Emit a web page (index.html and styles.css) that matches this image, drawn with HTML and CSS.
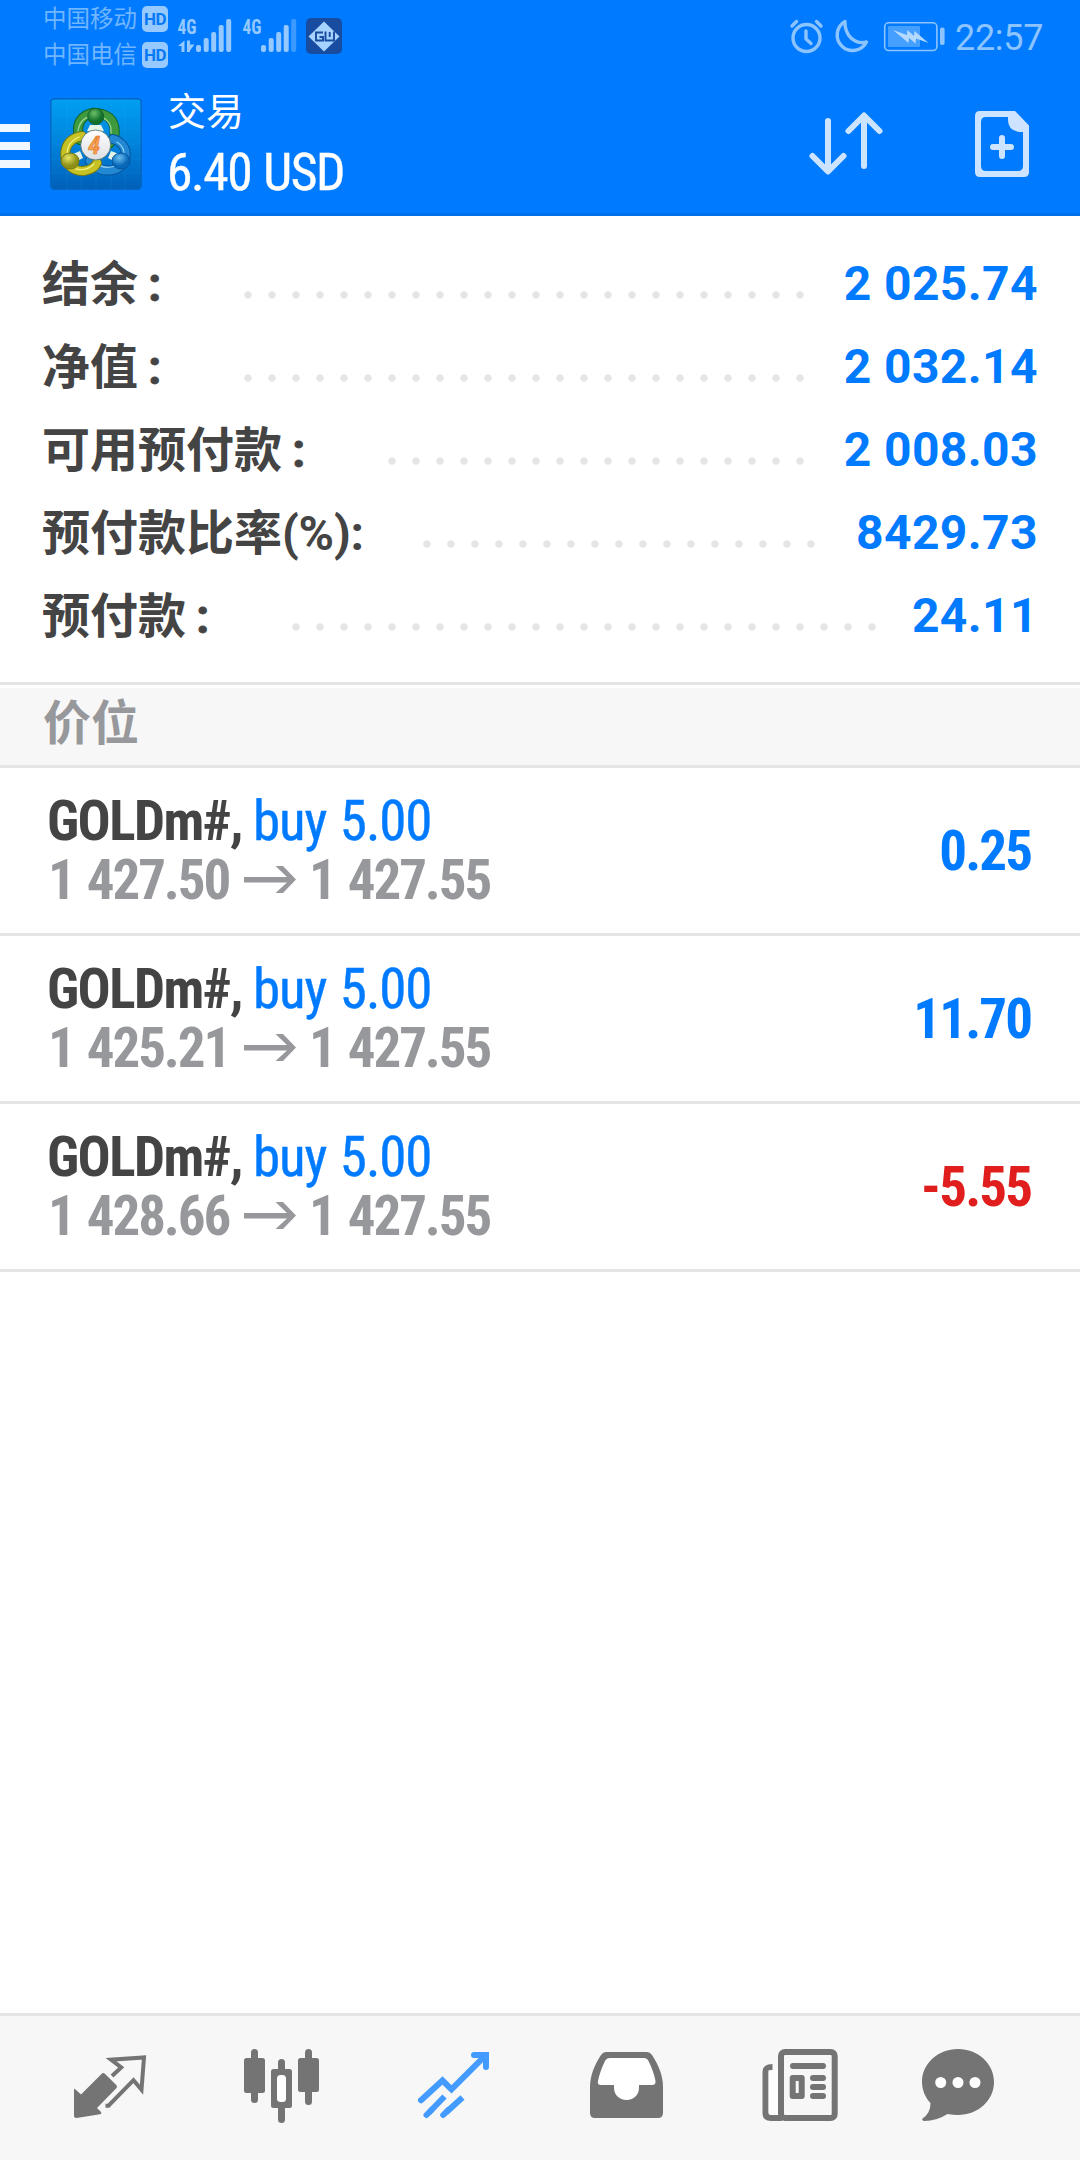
FILE: index.html
```html
<!DOCTYPE html>
<html lang="zh-CN">
<head>
<meta charset="utf-8">
<title>交易</title>
<link rel="stylesheet" href="styles.css">
</head>
<body>
<header class="header">
  <div class="status">
    <div class="carriers">
      <div class="carrier"><span>中国移动</span><b class="hd">HD</b></div>
      <div class="carrier"><span>中国电信</span><b class="hd">HD</b></div>
    </div>
    <svg class="signal" width="124" height="40" viewBox="176 16 124 40">
      <g class="tag"><text x="177.500" y="33.500" textLength="19" lengthAdjust="spacingAndGlyphs">4G</text><text x="242.500" y="33.500" textLength="19" lengthAdjust="spacingAndGlyphs">4G</text></g>
      <path d="M184.500 40.500v11.500h-3v-6h-3.500zM187 40.500h3v4h4.500l-4.500 6v1.500h-3z"/>
      <g><rect x="196" y="45" width="5" height="7" rx="2"/><rect x="203.700" y="38" width="5" height="14" rx="2"/><rect x="211.200" y="32" width="5" height="20" rx="2"/><rect x="218.700" y="25" width="5" height="27" rx="2"/><rect x="226.200" y="19" width="5" height="33" rx="2"/></g>
      <g><rect x="261" y="45" width="5" height="7" rx="2"/><rect x="268.700" y="38" width="5" height="14" rx="2"/><rect x="276.200" y="32" width="5" height="20" rx="2"/><rect x="283.700" y="25" width="5" height="27" rx="2"/><rect x="291.200" y="19" width="5" height="33" rx="2" opacity=".4"/></g>
    </svg>
    <svg class="gu" width="36" height="36" viewBox="0 0 36 36">
      <rect width="36" height="36" rx="5" fill="#174ca0"/><path d="M18 3.500l15.500 15-15.500 15-15.500-15z" fill="#a5d2ff"/>
      <path d="M17 14.500H10v8h7v-3.500h-3.500M19.500 13.500v9h8.500V13.500M23.700 14v5" fill="none" stroke="#174ca0" stroke-width="1.900"/>
    </svg>
    <svg class="sys" width="158" height="40" viewBox="788 16 158 40">
      <g fill="none" stroke="#8cc4ff" stroke-width="3.400" stroke-linecap="round" stroke-linejoin="round">
        <circle cx="806.500" cy="38" r="13.500"/><path d="M806 31v8l5 4.500M792 26l4.500-4.500M821 26l-4.500-4.500"/>
        <path d="M845 21.500a15.500 15.500 0 1 0 21.500 20.500c-12 3-22-7-21.500-20.500z"/>
      </g>
      <rect x="884.700" y="22.800" width="52.200" height="27.700" rx="4" fill="none" stroke="#8cc4ff" stroke-width="1.600"/>
      <rect x="888" y="26" width="32" height="21" rx="1" fill="#459fff"/>
      <path d="M893 30l14 5 .5-5 6.500 6 .5-5 14 12-12.500-4.500-.5 5-6.500-5.500-.5 5z" fill="#b4d9ff"/>
      <rect x="940" y="27.500" width="4.600" height="17.500" rx="2" fill="#8cc4ff"/>
    </svg>
    <time class="clock">22:57</time>
  </div>
  <div class="toolbar">
    <div class="menu"><i></i><i></i><i></i></div>
    <svg class="logo" width="92" height="92" viewBox="0 0 92 92">
      <defs>
        <linearGradient id="bg" x2="0" y2="1"><stop offset="0" stop-color="#009ff2"/><stop offset=".5" stop-color="#0083dc"/><stop offset="1" stop-color="#005fb8"/></linearGradient>
        <radialGradient id="g" cx=".4" cy=".3"><stop offset="0" stop-color="#6cbf68"/><stop offset="1" stop-color="#11702b"/></radialGradient>
        <radialGradient id="y" cx=".4" cy=".3"><stop offset="0" stop-color="#e9e562"/><stop offset="1" stop-color="#8f9018"/></radialGradient>
        <radialGradient id="b" cx=".4" cy=".3"><stop offset="0" stop-color="#6abff0"/><stop offset="1" stop-color="#0868b8"/></radialGradient>
        <linearGradient id="w" x2="0" y2="1"><stop offset="0" stop-color="#fff"/><stop offset="1" stop-color="#dcdfe4"/></linearGradient>
      </defs>
      <rect x=".7" y=".7" width="90.600" height="90.600" rx="4" fill="url(#bg)" stroke="#0567c4" stroke-width="1.500"/>
      <path d="M17 1v90M31 1v90M46 1v90M61 1v90M75 1v90M1 17h90M1 31h90M1 46h90M1 61h90M1 75h90" stroke="#35b4f5" stroke-opacity=".12"/>
      <g fill="none" stroke-linecap="round">
        <path d="M30 42C22 19 41 14 46 15C61 16 67 26 64 40L58 47" stroke="#126327" stroke-width="10"/>
        <path d="M30 42C22 19 41 14 46 15C61 16 67 26 64 40L58 47" stroke="#3f9a3e" stroke-width="8"/>
        <path d="M28 33C30 20 38 18 45 18C56 19 62 25 61 35" stroke="#9bd694" stroke-width="1.300"/>
        <path d="M63 41C80 46 79 66 66 71C52 76 43 68 40 63" stroke="#07549c" stroke-width="10"/>
        <path d="M63 41C80 46 79 66 66 71C52 76 43 68 40 63" stroke="#2288d3" stroke-width="8"/>
        <path d="M67 44C78 51 75 65 65 68C56 71 49 68 45 64" stroke="#8dcff5" stroke-width="1.300"/>
        <path d="M32 38C14 41 12 58 19 67C28 77 43 73 47 65" stroke="#777a12" stroke-width="10"/>
        <path d="M32 38C14 41 12 58 19 67C28 77 43 73 47 65" stroke="#c6c224" stroke-width="8"/>
        <path d="M29 39C18 44 16 52 18 60M26 71C34 73 40 70 44 66" stroke="#f4f07f" stroke-width="1.300"/>
      </g>
      <path d="M40 27h11l3 6H37zM23 56l7-3 3 7-6 3zM69 56l-8-3-3 7 6 3z" fill="#e4f2e7"/>
      <circle cx="45.700" cy="18.500" r="8" fill="url(#g)" stroke="#126327"/>
      <ellipse cx="20" cy="63" rx="9" ry="8" fill="url(#y)" stroke="#777a12"/>
      <ellipse cx="71" cy="63" rx="9" ry="8" fill="url(#b)" stroke="#07549c"/>
      <circle cx="45.700" cy="47" r="15" fill="url(#w)" stroke="#4b6b65" stroke-width=".8"/>
      <text x="38" y="56" class="logo-num">4</text>
    </svg>
    <div class="heading">
      <h1>交易</h1>
      <div class="equity cond">6.40 USD</div>
    </div>
    <svg class="sort" width="80" height="72" viewBox="806 108 80 72" fill="none" stroke="#cce4ff" stroke-width="6" stroke-linecap="round" stroke-linejoin="round"><path d="M828 121v50M812.500 156l15.500 15.500 15.500-15.500M864 166v-50M848.500 131l15.500-15.500 15.500 15.500"/></svg>
    <svg class="new" width="54" height="66" viewBox="975 111 54 66"><path fill="#cce4ff" fill-rule="evenodd" d="M980 111h35l14 14.500V172q0 5-5 5h-44q-5 0-5-5v-56q0-5 5-5zM986 117q-5 0-5 5v44q0 5 5 5h32q5 0 5-5v-34h-3q-12-1-12-12v-3z"/><path d="M1002 138v18M993 147h18" stroke="#cce4ff" stroke-width="6" stroke-linecap="round"/></svg>
  </div>
</header>
<section class="summary">
  <div class="sum"><span class="label">结余<i class="wide">:</i></span><span class="dots" style="--n:24;--gap:40px"></span><b>2 025.74</b></div>
  <div class="sum"><span class="label">净值<i class="wide">:</i></span><span class="dots" style="--n:24;--gap:40px"></span><b>2 032.14</b></div>
  <div class="sum"><span class="label">可用预付款<i class="wide">:</i></span><span class="dots" style="--n:18;--gap:40px"></span><b>2 008.03</b></div>
  <div class="sum"><span class="label">预付款比率<span class="pct">(%):</span></span><span class="dots" style="--n:17;--gap:41px"></span><b>8429.73</b></div>
  <div class="sum"><span class="label">预付款<i class="wide">:</i></span><span class="dots" style="--n:25;--gap:36px"></span><b>24.11</b></div>
</section>
<h2 class="section">价位</h2>
<main class="positions">
  <article class="pos">
    <div class="info">
      <div class="line"><b class="cond sym">GOLDm#,</b><span class="cond side">buy 5.00</span></div>
      <div class="line prices"><b class="cond open">1 427.50</b><svg width="52" height="28" viewBox="0 0 52 28"><path d="M0 11h43L31.500 0h7.500l13 13.500L39 27h-7.500L43 16.500H0z"/></svg><b class="cond now">1 427.55</b></div>
    </div>
    <b class="cond profit">0.25</b>
  </article>
  <article class="pos">
    <div class="info">
      <div class="line"><b class="cond sym">GOLDm#,</b><span class="cond side">buy 5.00</span></div>
      <div class="line prices"><b class="cond open">1 425.21</b><svg width="52" height="28" viewBox="0 0 52 28"><path d="M0 11h43L31.500 0h7.500l13 13.500L39 27h-7.500L43 16.500H0z"/></svg><b class="cond now">1 427.55</b></div>
    </div>
    <b class="cond profit">11.70</b>
  </article>
  <article class="pos">
    <div class="info">
      <div class="line"><b class="cond sym">GOLDm#,</b><span class="cond side">buy 5.00</span></div>
      <div class="line prices"><b class="cond open">1 428.66</b><svg width="52" height="28" viewBox="0 0 52 28"><path d="M0 11h43L31.500 0h7.500l13 13.500L39 27h-7.500L43 16.500H0z"/></svg><b class="cond now">1 427.55</b></div>
    </div>
    <b class="cond profit loss">-5.55</b>
  </article>
</main>
<nav class="tabs">
  <svg viewBox="70 2046 80 80"><path d="M74 2090q0-2 1.500-.500l5.500 5 20.500-20.500q1.800-1.800 3.600 0l11.200 11q1.500 1.700 0 3.300L97 2108l4 4q1 2-1 2.300L76.500 2118q-2.500 0-2.500-2.500z"/><path d="M112 2076l9.200-8.500-10.200-7.800 33-2.200-2.500 32.200-8-9.500-25 25.500h-3" fill="none" stroke="#747474" stroke-width="4"/></svg>
  <svg viewBox="242 2046 80 80"><g><rect x="251" y="2049" width="7" height="54" rx="3.500"/><rect x="244" y="2058" width="21" height="35" rx="2.500"/><rect x="278" y="2059" width="7" height="64" rx="3.500"/><rect x="271" y="2069" width="21" height="39" rx="2.500"/><rect x="277" y="2075" width="9" height="27" rx="3.500" fill="#fff"/><rect x="305" y="2049" width="7" height="56" rx="3.500"/><rect x="298" y="2058" width="21" height="34" rx="2.500"/></g></svg>
  <svg viewBox="414 2046 80 80"><g fill="none" stroke="#449bff" stroke-width="6"><path stroke-linecap="round" d="M421 2100.300l21.500-19.800 9 8.800 33-33M474 2055h12v12"/><path d="M429 2112.500l15.500-16M446 2112.500l16.500-15"/><path stroke-linecap="round" d="M426.500 2115l5-5M443.200 2115l5-5"/></g></svg>
  <svg viewBox="586 2046 80 80"><path d="M606 2052h41q3 0 5 3c7 11 11 21 11 32v26q0 5-5 5h-63q-5 0-5-5v-26c0-11 4-21 11-32q2-3 5-3z"/><path fill="#fff" d="M610 2058h34q3 0 4.500 3c3 6 6 14 7 20q.500 4-3.500 4h-13v2q0 6-3 9-4 4-9.500 4t-9.500-4q-3-3-3-9v-2h-13q-4 0-3-4c1-6 4-14 7-20q1.500-3 5-3z"/></svg>
  <svg viewBox="758 2046 80 80"><rect x="781" y="2052" width="53.700" height="66" rx="4" fill="#f7f7f7" stroke="#747474" stroke-width="6"/><path d="M782 2118h-11q-5.500 0-5.500-5v-41q0-5 7-5" fill="none" stroke="#747474" stroke-width="6"/><path d="M768.500 2070h9.500v45h-7q-2.500 0-2.500-3z" fill="#fff" opacity=".7"/><rect x="790" y="2063" width="36" height="6" rx="3"/><rect x="792.700" y="2078" width="9" height="18" fill="none" stroke="#747474" stroke-width="6" stroke-linejoin="round"/><rect x="810" y="2075" width="16" height="6" rx="3"/><rect x="810" y="2084" width="16" height="6" rx="3"/><rect x="810" y="2093" width="16" height="6" rx="3"/></svg>
  <svg viewBox="930 2046 80 80"><path d="M958 2049c20 0 36 14.500 36 33s-16 33-36 33q-5 0-10.500-1-11 7-23 7-3-.500-2-2.500 8-5 8-15.500c-5-5-8.500-13-8.500-21 0-18.500 16-33 36-33z"/><g fill="#fff"><circle cx="940.700" cy="2082.500" r="5.500"/><circle cx="958" cy="2082.500" r="5.500"/><circle cx="975" cy="2082.500" r="5.500"/></g></svg>
</nav>
</body>
</html>
```
FILE: styles.css
```css
* { box-sizing: border-box; }
body {
  margin: 0;
  width: 1080px;
  height: 2160px;
  display: flex;
  flex-direction: column;
  background: #fff;
  color: #444;
  font-family: Roboto, "Noto Sans CJK SC", sans-serif;
  overflow: hidden;
}
svg { display: block; flex: none; }
i { font-style: normal; }
h1, h2 { margin: 0; font-weight: 400; }

.cond {
  font-family: "Roboto Condensed", Roboto, sans-serif;
  font-stretch: 75%;
  white-space: pre;
}

.header { height: 216px; background: #007aff; border-bottom: 3px solid #0070ea; color: #fff; }

.status { display: flex; height: 72px; align-items: flex-start; color: #8cc4ff; }
.carriers { width: 133px; margin-left: 43px; padding-top: 1px; }
.carrier { display: flex; align-items: center; height: 36px; gap: 5px; font-size: 23.500px; line-height: 36px; color: #70b5ff; }
.carrier span { width: 94px; white-space: nowrap; }
.hd { width: 26px; height: 26px; border-radius: 5px; background: #95c9ff; color: #0879f5; font-size: 17px; line-height: 26px; text-align: center; letter-spacing: -.5px; }
.signal { margin-top: 16px; fill: #95c9ff; }
.tag { font: 700 20px "Roboto Condensed", Roboto, sans-serif; }
.gu { margin: 18px 0 0 6px; }
.sys { margin: 16px 0 0 auto; }
.clock { width: 134px; padding-left: 9px; font-size: 36px; line-height: 76px; letter-spacing: -.3px; }

.toolbar { display: flex; height: 141px; align-items: flex-start; }
.menu { width: 30px; margin-top: 52px; display: grid; gap: 10px; }
.menu i { height: 8px; background: #f0f7ff; }
.logo { margin: 26px 0 0 20px; }
.logo-num { font: italic 700 25px "Roboto Condensed", Roboto, sans-serif; fill: #f9a04f; stroke: #d9762a; stroke-width: .5px; }
.heading { margin-left: 26px; }
h1 { font-size: 38px; line-height: 44px; margin-top: 18px; }
.equity { margin: 9px 0 0 -1px; font-size: 51.500px; line-height: 60px; letter-spacing: -1.4px; word-spacing: 1.5px; -webkit-text-stroke: .4px #fff; }
.sort { margin: 36px 89px 0 auto; }
.new { margin: 39px 51px 0 0; }

.summary { height: 466px; padding: 27px 43px 0; }
.sum { display: flex; height: 83px; align-items: center; font-size: 48px; line-height: 83px; }
.label { margin: -1px 0 0 -1px; white-space: nowrap; font-weight: 700; }
.wide { margin-left: 10px; -webkit-text-stroke: .8px #444; }
.pct { letter-spacing: -.2px; }
.dots {
  width: calc(24px * (var(--n) - 1) + 8px);
  height: 8px;
  margin: 20px var(--gap) 0 auto;
  background: radial-gradient(circle 4px at 4px 4px, #e5e5e5 85%, transparent) 0 0 / 24px 8px;
}
.sum b { color: #007aff; font-weight: 700; margin-right: -1px; padding-bottom: 3px; letter-spacing: .4px; white-space: nowrap; }

.section {
  height: 86px;
  padding: 5px 0 0 43px;
  border-top: 3px solid #e5e5e5;
  border-bottom: 3px solid #e5e5e5;
  background: linear-gradient(#fff 3px, #f7f7f7 3px);
  color: #97989b;
  font-size: 48px;
  font-weight: 700;
  line-height: 67px;
}

.pos { display: flex; justify-content: space-between; height: 168px; padding: 23px 48px 0 47px; border-bottom: 3px solid #e5e5e5; font-size: 55px; }
.line { display: flex; height: 59px; line-height: 61px; }
.sym { width: 193px; letter-spacing: -1.6px; }
.side { margin-left: 13px; color: #007aff; letter-spacing: -1.1px; word-spacing: 2px; -webkit-text-stroke: .4px #007aff; }
.prices { color: #97989b; letter-spacing: -2.1px; word-spacing: 2.5px; }
.open { width: 184px; margin-left: 1px; }
.prices svg { margin: 16px 12px 0; fill: #97989b; }
.now { padding-left: 1px; }
.profit { color: #007aff; line-height: 121px; letter-spacing: -1.8px; margin-right: .7px; }
.loss { color: #e01e1e; }

.tabs { display: flex; gap: 92px; height: 147px; margin-top: auto; padding: 30px 0 0 70px; border-top: 3px solid #e5e5e5; background: #f7f7f7; }
.tabs svg { width: 80px; height: 80px; fill: #747474; overflow: visible; }
```
